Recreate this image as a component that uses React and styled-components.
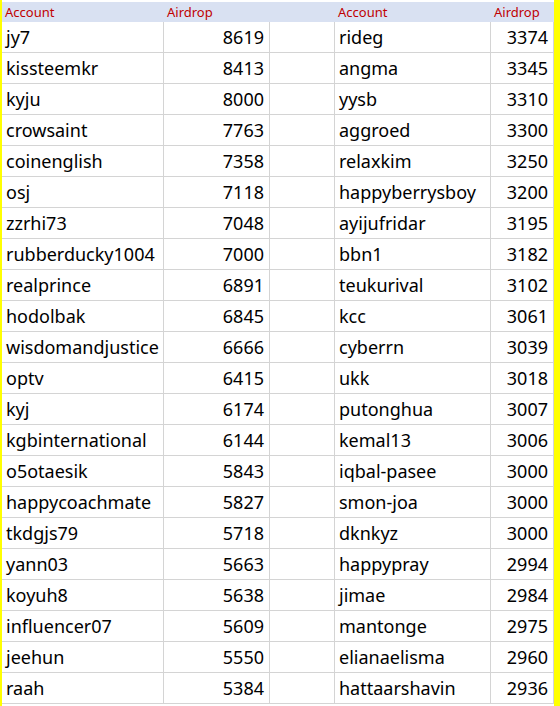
import React from 'react';
import styled, { createGlobalStyle } from 'styled-components';

const GlobalStyle = createGlobalStyle`
  html, body {
    margin: 0;
    padding: 0;
    background: #ffffff;
  }
`;

const left = [
  ['jy7', 8619], ['kissteemkr', 8413], ['kyju', 8000], ['crowsaint', 7763],
  ['coinenglish', 7358], ['osj', 7118], ['zzrhi73', 7048], ['rubberducky1004', 7000],
  ['realprince', 6891], ['hodolbak', 6845], ['wisdomandjustice', 6666], ['optv', 6415],
  ['kyj', 6174], ['kgbinternational', 6144], ['o5otaesik', 5843], ['happycoachmate', 5827],
  ['tkdgjs79', 5718], ['yann03', 5663], ['koyuh8', 5638], ['influencer07', 5609],
  ['jeehun', 5550], ['raah', 5384],
];

const right = [
  ['rideg', 3374], ['angma', 3345], ['yysb', 3310], ['aggroed', 3300],
  ['relaxkim', 3250], ['happyberrysboy', 3200], ['ayijufridar', 3195], ['bbn1', 3182],
  ['teukurival', 3102], ['kcc', 3061], ['cyberrn', 3039], ['ukk', 3018],
  ['putonghua', 3007], ['kemal13', 3006], ['iqbal-pasee', 3000], ['smon-joa', 3000],
  ['dknkyz', 3000], ['happypray', 2994], ['jimae', 2984], ['mantonge', 2975],
  ['elianaelisma', 2960], ['hattaarshavin', 2936],
];

const Page = styled.div`
  display: flex;
  width: 560px;
  height: 706px;
  overflow: hidden;
  font-family: 'Noto Sans', 'Noto Sans CJK KR', sans-serif;
`;

const Edge = styled.div`
  flex: 0 0 ${p => p.w}px;
  background: #ffff00;
`;

const Sheet = styled.div`
  flex: 1;
  padding-top: 2px;
  display: grid;
  grid-template-columns: 162px 106px 65px 156px 63px;
  grid-auto-rows: 31px;
  grid-template-rows: 20px;
  align-content: start;
`;

const Head = styled.div`
  background: #d9e1f2;
  color: #c00000;
  font-size: 13px;
  line-height: 20px;
  padding-left: 3px;
`;

const Cell = styled.div`
  box-sizing: border-box;
  border-right: 1px solid #d4d4d4;
  border-bottom: 1px solid #d4d4d4;
  color: #000;
  font-size: 18px;
  line-height: 31px;
  padding: 0 ${p => (p.num ? 5 : 0)}px 0 ${p => (p.num ? 0 : 4)}px;
  text-align: ${p => (p.num ? 'right' : 'left')};
  white-space: nowrap;
  overflow: hidden;
`;

const App = () => (
  <>
    <GlobalStyle />
    <Page>
      <Edge w={2} />
      <Sheet>
        <Head>Account</Head>
        <Head>Airdrop</Head>
        <Head />
        <Head>Account</Head>
        <Head>Airdrop</Head>
        {left.map((row, i) => (
          <React.Fragment key={i}>
            <Cell>{row[0]}</Cell>
            <Cell num>{row[1]}</Cell>
            <Cell />
            <Cell>{right[i][0]}</Cell>
            <Cell num>{right[i][1]}</Cell>
          </React.Fragment>
        ))}
      </Sheet>
      <Edge w={6} />
    </Page>
  </>
);

export default App;
